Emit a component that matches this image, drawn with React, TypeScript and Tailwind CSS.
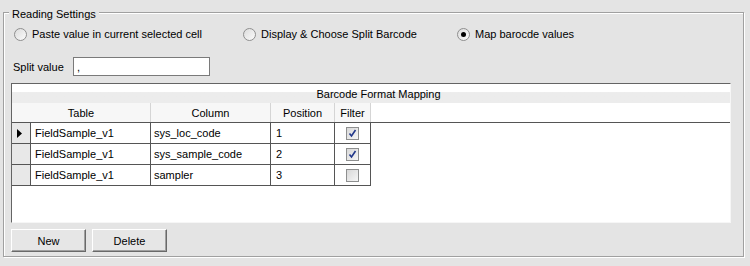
import React from 'react';

const font = { fontFamily: '"Liberation Sans", Arial, sans-serif' };

const Radio = ({ checked }: { checked?: boolean }) => (
  <span className="w-[13px] h-[13px] rounded-full border border-[#8f8f8f] bg-gradient-to-br from-[#dcdcdc] to-[#fbfbfb] flex items-center justify-center shrink-0">
    {checked && <span className="w-[5px] h-[5px] rounded-full bg-black" />}
  </span>
);

const Check = ({ checked }: { checked?: boolean }) => (
  <span className="w-[13px] h-[13px] border border-[#8e8f8f] bg-gradient-to-br from-[#d8d8d8] to-[#f6f6f6] flex items-center justify-center">
    {checked && (
      <svg width="9" height="9" viewBox="0 0 9 9">
        <path d="M1.5 4.5 L3.5 7 L7.5 1" stroke="#21378a" strokeWidth="1.6" fill="none" />
      </svg>
    )}
  </span>
);

const rows = [
  { table: 'FieldSample_v1', column: 'sys_loc_code', position: '1', filter: true },
  { table: 'FieldSample_v1', column: 'sys_sample_code', position: '2', filter: true },
  { table: 'FieldSample_v1', column: 'sampler', position: '3', filter: false },
];

const Button = ({ label }: { label: string }) => (
  <button className="w-[75px] h-[23px] border border-t-white border-l-white border-r-[#696969] border-b-[#696969] shadow-[inset_-1px_-1px_0_#a0a0a0] bg-[#e6e6e6] text-[11px] leading-[14px] text-black flex items-center justify-center">
    {label}
  </button>
);

const App = () => {
  return (
    <div className="w-[750px] h-[266px] bg-[#e4e4e4] pt-[12px] pl-[3px] text-[11px] leading-[14px] text-black" style={font}>
      <div className="relative w-[741px] h-[245px] border border-[#a0a0a0] shadow-[inset_1px_1px_0_#fff,1px_1px_0_#fff]">
        <span className="absolute left-[5px] top-[-6px] px-[3px] bg-[#e4e4e4]">Reading Settings</span>

        <div className="flex items-center pt-[14px] pl-[10px]">
          <label className="w-[229px] flex items-center gap-[5px]">
            <Radio />
            <span>Paste value in current selected cell</span>
          </label>
          <label className="w-[214px] flex items-center gap-[5px]">
            <Radio />
            <span>Display &amp; Choose Split Barcode</span>
          </label>
          <label className="flex items-center gap-[5px]">
            <Radio checked />
            <span>Map barocde values</span>
          </label>
        </div>

        <div className="flex items-center mt-[16px] pl-[9px]">
          <span className="w-[60px]">Split value</span>
          <div className="w-[137px] h-[19px] border border-[#7a7a7a] bg-white px-[3px] flex items-center">,</div>
        </div>

        <div className="ml-[7px] mt-[7px] w-[720px] h-[140px] border border-l-[#646464] border-t-[#646464] border-r-[#f6f6f6] border-b-[#f6f6f6] bg-white flex flex-col">
          <div className="h-[19px] shrink-0 bg-gradient-to-b from-white from-40% to-[#ececec] to-45% flex items-center justify-center pl-[15px]">
            Barcode Format Mapping
          </div>
          <div className="flex h-[20px] shrink-0 border-b border-[#555]">
            <div className="w-[139px] border-r border-[#d5d5d5] bg-[#f7f7f7] flex items-center justify-center">Table</div>
            <div className="w-[120px] border-r border-[#d5d5d5] bg-[#f7f7f7] flex items-center justify-center">Column</div>
            <div className="w-[64px] border-r border-[#d5d5d5] bg-[#f7f7f7] flex items-center justify-center">Position</div>
            <div className="w-[36px] border-r border-[#d5d5d5] bg-[#f7f7f7] flex items-center justify-center">Filter</div>
          </div>
          {rows.map((r, i) => (
            <div key={i} className="flex h-[21px] shrink-0">
              <div className="w-[19px] border-r border-b border-[#555] bg-[#e8e8e8] flex items-center pl-[5px]">
                {i === 0 && (
                  <svg width="5" height="9" viewBox="0 0 5 9">
                    <path d="M0 0 L5 4.5 L0 9 Z" fill="#000" />
                  </svg>
                )}
              </div>
              <div className="w-[120px] border-r border-b border-[#555] flex items-center pl-[4px]">{r.table}</div>
              <div className="w-[120px] border-r border-b border-[#555] flex items-center pl-[3px]">{r.column}</div>
              <div className="w-[64px] border-r border-b border-[#555] flex items-center pl-[5px]">{r.position}</div>
              <div className="w-[36px] border-r border-b border-[#555] flex items-center justify-center">
                <Check checked={r.filter} />
              </div>
            </div>
          ))}
        </div>

        <div className="flex gap-[6px] ml-[7px] mt-[6px]">
          <Button label="New" />
          <Button label="Delete" />
        </div>
      </div>
    </div>
  );
};

export default App;
